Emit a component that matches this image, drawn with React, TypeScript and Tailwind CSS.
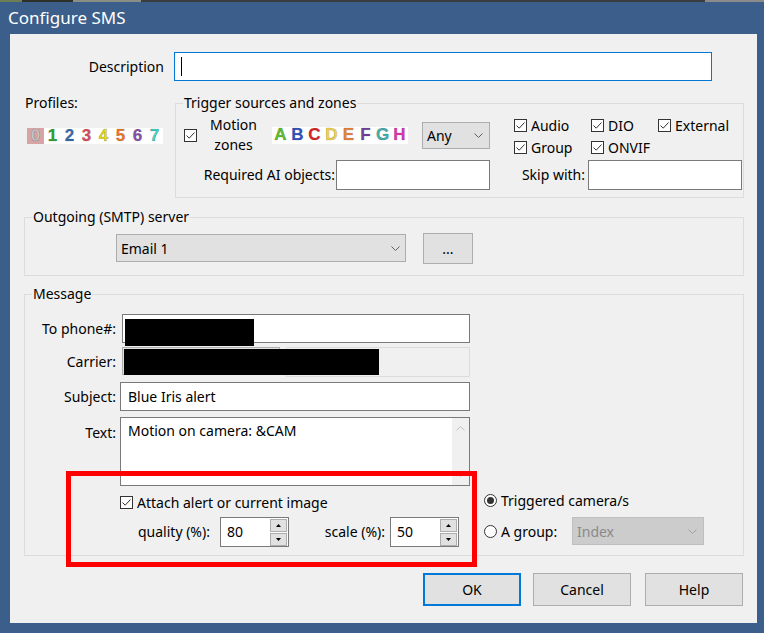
import type { ReactNode } from 'react';

const font = "font-['Noto_Sans',sans-serif]";

function Check({ className = '' }: { className?: string }) {
  return (
    <span className={`flex h-[13px] w-[13px] shrink-0 items-center justify-center border border-[#333333] bg-white ${className}`}>
      <svg width="11" height="11" viewBox="0 0 11 11">
        <path d="M1.5 5.5 L4.2 8.2 L9.5 2.5" fill="none" stroke="#333333" strokeWidth="1" />
      </svg>
    </span>
  );
}

function Radio({ on }: { on?: boolean }) {
  return (
    <span className="flex h-[13px] w-[13px] shrink-0 items-center justify-center rounded-full border border-[#333333] bg-white">
      {on && <span className="h-[7px] w-[7px] rounded-full bg-[#333333]" />}
    </span>
  );
}

function Chevron({ color = '#606060' }: { color?: string }) {
  return (
    <svg width="9" height="5" viewBox="0 0 9 5">
      <path d="M0.5 0.5 L4.5 4.5 L8.5 0.5" fill="none" stroke={color} strokeWidth="1" />
    </svg>
  );
}

function Group({ title, className, children }: { title: string; className: string; children: ReactNode }) {
  return (
    <div className={`flex flex-col border border-[#dcdcdc] ${className}`}>
      <div className="-mt-[11px] ml-[7px] h-[20px] w-max bg-[#f0f0f0] px-px leading-[20px]">{title}</div>
      {children}
    </div>
  );
}

function Spinner({ value }: { value: string }) {
  return (
    <div className="flex h-[30px] w-[69px] items-center border border-[#7a7a7a] bg-white">
      <span className="flex-1 pl-[6px] leading-[20px]">{value}</span>
      <div className="mr-px flex h-[27px] w-[17px] flex-col gap-px">
        <span className="flex flex-1 items-center justify-center border border-[#adadad] bg-[#e1e1e1]">
          <svg width="5" height="3" viewBox="0 0 5 3"><path d="M2.5 0 L5 3 L0 3 Z" fill="#000" /></svg>
        </span>
        <span className="flex flex-1 items-center justify-center border border-[#adadad] bg-[#e1e1e1]">
          <svg width="5" height="3" viewBox="0 0 5 3"><path d="M0 0 L5 0 L2.5 3 Z" fill="#000" /></svg>
        </span>
      </div>
    </div>
  );
}

const digits = [
  { c: '0', color: 'text-[#c8c8c8]', bg: 'bg-[#d6a4a4]' },
  { c: '1', color: 'text-[#2fa52f]', bg: '' },
  { c: '2', color: 'text-[#3a6cae]', bg: '' },
  { c: '3', color: 'text-[#e0505c]', bg: '' },
  { c: '4', color: 'text-[#e6dc1e]', bg: '' },
  { c: '5', color: 'text-[#f07a2a]', bg: '' },
  { c: '6', color: 'text-[#8a52aa]', bg: '' },
  { c: '7', color: 'text-[#3fd6c6]', bg: '' },
];

const letters = [
  { c: 'A', color: 'text-[#5cc02c]' },
  { c: 'B', color: 'text-[#3252c2]' },
  { c: 'C', color: 'text-[#e02424]' },
  { c: 'D', color: 'text-[#f2d44a]' },
  { c: 'E', color: 'text-[#f08434]' },
  { c: 'F', color: 'text-[#7442a2]' },
  { c: 'G', color: 'text-[#44b2b2]' },
  { c: 'H', color: 'text-[#e034b2]' },
];

const glyph = "font-['Liberation_Sans',sans-serif] text-[17px] font-bold leading-[16px] [-webkit-text-stroke:0.6px_rgba(0,0,0,0.28)]";

export default function App() {
  return (
    <div className={`relative flex h-[633px] w-[764px] flex-col overflow-hidden bg-[#3c5e8a] text-[14px] text-black ${font}`}>
      <div className="flex h-[2px]">
        <div className="w-[22px] bg-[#6d7f52]" />
        <div className="w-[51px] bg-[#2c2f2a]" />
        <div className="w-[68px] bg-[#8a8f86]" />
        <div className="flex-1 bg-[#3a3d40]" />
        <div className="w-[59px] bg-[#8b8b8b]" />
      </div>
      <div className="h-[32px] pl-[8px] text-[17px] leading-[32px] text-white">Configure SMS</div>

      <div className="ml-[10px] flex h-[589px] w-[747px] flex-col bg-[#f0f0f0]">
        {/* description */}
        <div className="mt-[18px] flex">
          <div className="w-[154px] text-right leading-[29px]">Description</div>
          <div className="ml-[10px] h-[29px] w-[538px] border border-[#0078d7] bg-white">
            <div className="ml-[6px] mt-[4px] h-[19px] w-px bg-black" />
          </div>
        </div>

        {/* profiles + trigger */}
        <div className="mt-[22px] flex items-start">
          <div className="flex w-[165px] flex-col">
            <div className="-mt-[10px] pl-[15px] leading-[20px]">Profiles:</div>
            <div className="ml-[17px] mt-[15px] flex h-[16px] w-[136px] bg-white">
              {digits.map((d) => (
                <span key={d.c} className={`w-[17px] text-center ${glyph} ${d.color} ${d.bg}`}>{d.c}</span>
              ))}
            </div>
          </div>

          <Group title="Trigger sources and zones" className="w-[569px]">
            <div className="flex pb-[7px]">
              <div className="flex w-[314px] flex-col">
                <div className="mt-[7px] flex h-[30px] items-center">
                  <Check className="ml-[8px]" />
                  <div className="ml-[8px] w-[57px] text-center leading-[20px]">Motion zones</div>
                  <div className="ml-[10px] flex h-[17px] w-[136px] items-center bg-white">
                    {letters.map((l) => (
                      <span key={l.c} className={`w-[17px] text-center ${glyph} ${l.color}`}>{l.c}</span>
                    ))}
                  </div>
                  <div className="ml-[14px] flex h-[27px] w-[68px] items-center justify-between border border-[#adadad] bg-[#e1e1e1] pl-[4px] pr-[6px]">
                    <span>Any</span>
                    <Chevron />
                  </div>
                </div>
                <div className="mt-[10px] flex">
                  <div className="w-[159px] text-right leading-[30px]">Required AI objects:</div>
                  <div className="ml-px h-[30px] w-[154px] border border-[#7a7a7a] bg-white" />
                </div>
              </div>

              <div className="ml-[24px] flex w-[229px] flex-col">
                <div className="mt-[1px] flex h-[22px] items-center">
                  <div className="flex w-[77px] items-center gap-[4px]"><Check /><span>Audio</span></div>
                  <div className="flex w-[67px] items-center gap-[4px]"><Check /><span>DIO</span></div>
                  <div className="flex items-center gap-[4px]"><Check /><span>External</span></div>
                </div>
                <div className="flex h-[22px] items-center">
                  <div className="flex w-[77px] items-center gap-[4px]"><Check /><span>Group</span></div>
                  <div className="flex items-center gap-[4px]"><Check /><span>ONVIF</span></div>
                </div>
                <div className="mt-[2px] flex">
                  <div className="w-[71px] text-right leading-[30px]">Skip with:</div>
                  <div className="ml-[3px] h-[30px] w-[154px] border border-[#7a7a7a] bg-white" />
                </div>
              </div>
            </div>
          </Group>
        </div>

        {/* outgoing server */}
        <Group title="Outgoing (SMTP) server" className="ml-[14px] mt-[19px] w-[720px]">
          <div className="mt-[6px] flex items-start pb-[11px]">
            <div className="ml-[91px] mt-px flex h-[28px] w-[290px] items-center justify-between border border-[#adadad] bg-[#e1e1e1] pl-[4px] pr-[5px]">
              <span>Email 1</span>
              <Chevron />
            </div>
            <div className="ml-[17px] flex h-[31px] w-[50px] items-center justify-center border border-[#adadad] bg-[#e1e1e1]">...</div>
          </div>
        </Group>

        {/* message */}
        <Group title="Message" className="ml-[14px] mt-[18px] w-[720px]">
          <div className="flex flex-col pb-[8px]">
            <div className="mt-[10px] flex">
              <div className="w-[91px] text-right leading-[29px]">To phone#:</div>
              <div className="ml-[6px] h-[29px] w-[348px] border border-[#7a7a7a] bg-white">
                <div className="ml-[2px] mt-[4px] h-[27px] w-[129px] bg-black" />
              </div>
            </div>
            <div className="mt-[4px] flex items-start">
              <div className="w-[91px] text-right leading-[30px]">Carrier:</div>
              <div className="ml-[6px] h-[28px] w-[158px] border border-[#adadad] bg-[#e1e1e1]">
                <div className="relative z-10 ml-px mt-px h-[26px] w-[255px] bg-black" />
              </div>
              <div className="ml-[6px] h-[30px] w-[184px] border border-[#dcdcdc] bg-[#f0f0f0]" />
            </div>
            <div className="mt-[5px] flex">
              <div className="w-[91px] text-right leading-[29px]">Subject:</div>
              <div className="ml-[4px] h-[29px] w-[350px] border border-[#7a7a7a] bg-white pl-[7px] leading-[27px]">Blue Iris alert</div>
            </div>
            <div className="mt-[6px] flex">
              <div className="w-[91px] pt-[6px] text-right leading-[20px]">Text:</div>
              <div className="ml-[4px] flex h-[69px] w-[350px] border border-[#7a7a7a] bg-white">
                <div className="flex-1 pl-[7px] pt-[3px] leading-[20px]">Motion on camera: &amp;CAM</div>
                <div className="flex w-[17px] flex-col items-center justify-between bg-[#f0f0f0] py-[8px]">
                  <svg width="9" height="5" viewBox="0 0 9 5"><path d="M0.5 4.5 L4.5 0.5 L8.5 4.5" fill="none" stroke="#c0c0c0" strokeWidth="1" /></svg>
                  <Chevron color="#c0c0c0" />
                </div>
              </div>
            </div>

            <div className="flex">
              <div className="flex w-[434px] flex-col">
                <div className="ml-[95px] mt-[6px] flex h-[20px] items-center gap-[4px]">
                  <Check />
                  <span>Attach alert or current image</span>
                </div>
                <div className="mt-[5px] flex items-center">
                  <div className="ml-[113px] w-[82px] leading-[30px]">quality (%):</div>
                  <Spinner value="80" />
                  <div className="w-[101px] pr-[5px] text-right leading-[30px]">scale (%):</div>
                  <Spinner value="50" />
                </div>
              </div>
              <div className="ml-[25px] flex flex-col">
                <div className="mt-[4px] flex h-[20px] items-center gap-[4px]">
                  <Radio on />
                  <span>Triggered camera/s</span>
                </div>
                <div className="mt-[7px] flex h-[28px] items-center">
                  <Radio />
                  <span className="ml-[4px] w-[71px]">A group:</span>
                  <div className="flex h-[28px] w-[132px] items-center justify-between border border-[#bfbfbf] bg-[#cccccc] pl-[4px] pr-[6px] text-[#8a8a8a]">
                    <span>Index</span>
                    <Chevron color="#a0a0a0" />
                  </div>
                </div>
              </div>
            </div>
          </div>
        </Group>

        {/* buttons */}
        <div className="ml-[413px] mt-[17px] flex">
          <div className="flex h-[33px] w-[98px] items-center justify-center border-2 border-[#0078d7] bg-[#e1e1e1]">OK</div>
          <div className="ml-[12px] flex h-[33px] w-[98px] items-center justify-center border border-[#adadad] bg-[#e1e1e1]">Cancel</div>
          <div className="ml-[14px] flex h-[33px] w-[98px] items-center justify-center border border-[#adadad] bg-[#e1e1e1]">Help</div>
        </div>
      </div>

      {/* annotation */}
      <div className="absolute left-[66px] top-[471px] h-[96px] w-[411px] border-[5px] border-[#ff0000]" />
    </div>
  );
}
